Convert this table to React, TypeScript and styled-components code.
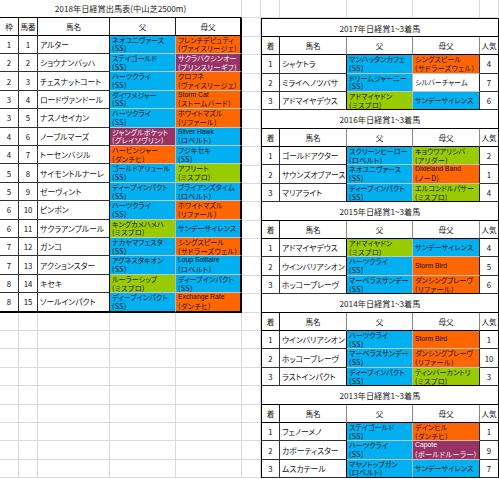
import { Fragment } from "react";
import styled, { createGlobalStyle } from "styled-components";

type Tone = "cyan" | "orange" | "purple" | "lime" | "none";
type Edge = "thick" | "dark" | "soft";

interface Blood {
  name: string;
  note?: string;
  tone: Tone;
  latin?: boolean;
}

interface Entry {
  waku: number;
  num: number;
  name: string;
  sire: Blood;
  dam: Blood;
}

interface Placed {
  place: number;
  name: string;
  sire: Blood;
  dam: Blood;
  pop: number;
}

interface Year {
  year: number;
  rows: Placed[];
}

const toneBg: Record<Tone, string> = {
  cyan: "#00b0f0",
  orange: "#ff6600",
  purple: "#993366",
  lime: "#99cc00",
  none: "#ffffff",
};

const c = (name: string, note?: string): Blood => ({ name, note, tone: "cyan" });
const o = (name: string, note?: string): Blood => ({ name, note, tone: "orange" });
const p = (name: string, note?: string): Blood => ({ name, note, tone: "purple" });
const l = (name: string, note?: string): Blood => ({ name, note, tone: "lime" });

const entries: Entry[] = [
  { waku: 1, num: 1, name: "アルター", sire: c("ネオユニヴァース", "(SS)"), dam: o("フレンチデピュティ", "(ヴァイスリージェ)") },
  { waku: 2, num: 2, name: "ショウナンバッハ", sire: c("ステイゴールド", "(SS)"), dam: p("サクラバクシンオー", "(プリンスリーギフ)") },
  { waku: 2, num: 3, name: "チェスナットコート", sire: c("ハーツクライ", "(SS)"), dam: o("クロフネ", "(ヴァイスリージェ)") },
  { waku: 3, num: 4, name: "ロードヴァンドール", sire: c("ダイワメジャー", "(SS)"), dam: { ...o("Storm Cat", "(ストームバード)"), latin: true } },
  { waku: 3, num: 5, name: "ナスノセイカン", sire: c("ハーツクライ", "(SS)"), dam: o("ホワイトマズル", "(リファール)") },
  { waku: 4, num: 6, name: "ノーブルマーズ", sire: p("ジャングルポケット", "(グレイソヴリン)"), dam: { ...c("Silver Hawk", "(ロベルト)"), latin: true } },
  { waku: 4, num: 7, name: "トーセンバジル", sire: o("ハービンジャー", "(ダンチヒ)"), dam: c("フジキセキ", "(SS)") },
  { waku: 5, num: 8, name: "サイモントルナーレ", sire: c("ゴールドアリュール", "(SS)"), dam: l("アフリート", "(ミスプロ)") },
  { waku: 5, num: 9, name: "ゼーヴィント", sire: c("ディープインパクト", "(SS)"), dam: c("ブライアンズタイム", "(ロベルト)") },
  { waku: 6, num: 10, name: "ピンポン", sire: c("ハーツクライ", "(SS)"), dam: o("ホワイトマズル", "(リファール)") },
  { waku: 6, num: 11, name: "サクラアンプルール", sire: l("キングカメハメハ", "(ミスプロ)"), dam: c("サンデーサイレンス") },
  { waku: 7, num: 12, name: "ガンコ", sire: c("ナカヤマフェスタ", "(SS)"), dam: o("シングスピール", "(サドラーズウェル)") },
  { waku: 7, num: 13, name: "アクションスター", sire: c("アグネスタキオン", "(SS)"), dam: { ...c("Loup Solitaire", "(ロベルト)"), latin: true } },
  { waku: 8, num: 14, name: "キセキ", sire: l("ルーラーシップ", "(ミスプロ)"), dam: c("ディープインパクト", "(SS)") },
  { waku: 8, num: 15, name: "ソールインパクト", sire: c("ディープインパクト", "(SS)"), dam: { ...o("Exchange Rate", "(ダンチヒ)"), latin: true } },
];

const years: Year[] = [
  {
    year: 2017,
    rows: [
      { place: 1, name: "シャケトラ", sire: c("マンハッタンカフェ", "(SS)"), dam: o("シングスピール", "(サドラーズウェル)"), pop: 4 },
      { place: 2, name: "ミライヘノツバサ", sire: c("ドリームジャーニー", "(SS)"), dam: { name: "シルバーチャーム", tone: "none" }, pop: 7 },
      { place: 3, name: "アドマイヤデウス", sire: l("アドマイヤドン", "(ミスプロ)"), dam: c("サンデーサイレンス"), pop: 6 },
    ],
  },
  {
    year: 2016,
    rows: [
      { place: 1, name: "ゴールドアクター", sire: c("スクリーンヒーロー", "(ロベルト)"), dam: l("キョウワアリシバ", "(アリダー)"), pop: 2 },
      { place: 2, name: "サウンズオブアース", sire: c("ネオユニヴァース", "(SS)"), dam: { ...o("Dixieland Band", "(ノーD)"), latin: true }, pop: 1 },
      { place: 3, name: "マリアライト", sire: c("ディープインパクト", "(SS)"), dam: l("エルコンドルパサー", "(ミスプロ)"), pop: 4 },
    ],
  },
  {
    year: 2015,
    rows: [
      { place: 1, name: "アドマイヤデウス", sire: l("アドマイヤドン", "(ミスプロ)"), dam: c("サンデーサイレンス"), pop: 4 },
      { place: 2, name: "ウインバリアシオン", sire: c("ハーツクライ", "(SS)"), dam: { ...o("Storm Bird"), latin: true }, pop: 5 },
      { place: 3, name: "ホッコーブレーヴ", sire: c("マーベラスサンデー", "(SS)"), dam: o("ダンシングブレーヴ", "(リファール)"), pop: 6 },
    ],
  },
  {
    year: 2014,
    rows: [
      { place: 1, name: "ウインバリアシオン", sire: c("ハーツクライ", "(SS)"), dam: { ...o("Storm Bird"), latin: true }, pop: 1 },
      { place: 2, name: "ホッコーブレーヴ", sire: c("マーベラスサンデー", "(SS)"), dam: o("ダンシングブレーヴ", "(リファール)"), pop: 10 },
      { place: 3, name: "ラストインパクト", sire: c("ディープインパクト", "(SS)"), dam: l("ティンバーカントリ", "(ミスプロ)"), pop: 3 },
    ],
  },
  {
    year: 2013,
    rows: [
      { place: 1, name: "フェノーメノ", sire: c("ステイゴールド", "(SS)"), dam: o("デインヒル", "(ダンチヒ)"), pop: 1 },
      { place: 2, name: "カポーティスター", sire: c("ハーツクライ", "(SS)"), dam: { ...p("Capote", "(ボールドルーラー)"), latin: true }, pop: 9 },
      { place: 3, name: "ムスカテール", sire: c("マヤノトップガン", "(ロベルト)"), dam: c("サンデーサイレンス"), pop: 7 },
    ],
  },
];

const GlobalStyle = createGlobalStyle`
  html, body {
    margin: 0;
    padding: 0;
    background: #ffffff;
  }
  body {
    font-family: "Noto Sans CJK JP", "Noto Sans", sans-serif;
    font-feature-settings: "palt";
    color: #111;
  }
`;

const Sheet = styled.div`
  display: grid;
  grid-template-columns: 19px 19px 72px 66px 66px 19px 19px 67px 66px 67px 19px;
  grid-template-rows: repeat(26, 18.4px);
  width: 499px;
  height: 479px;
  overflow: hidden;
`;

const Blank = styled.div`
  box-sizing: border-box;
  border-right: 1px solid #dadada;
  border-bottom: 1px solid #dadada;
`;

const LeftTable = styled.div`
  grid-column: 1 / 6;
  grid-row: 1 / 18;
  display: grid;
  grid-template-columns: 19px 19px 72px 66px 66px;
  grid-template-rows: repeat(17, 1fr);
`;

const RightTable = styled.div<{ $row: number; $first: boolean }>`
  grid-column: 7 / 12;
  grid-row: ${(p) => p.$row} / span 5;
  display: grid;
  grid-template-columns: 18px 67px 66px 67px 19px;
  grid-template-rows: repeat(5, 1fr);
  border-left: 1px solid #000;
  border-top: ${(p) => (p.$first ? "1px solid #000" : "none")};
  box-sizing: border-box;
`;

const Title = styled.div<{ $span: number; $edge: string }>`
  grid-column: span ${(p) => p.$span};
  box-sizing: border-box;
  display: flex;
  align-items: center;
  justify-content: center;
  font-size: 8.2px;
  white-space: nowrap;
  color: #222;
  border-right: 1px solid ${(p) => p.$edge};
  border-bottom: 1px solid #000;
`;

const Head = styled.div<{ $edge?: Edge }>`
  box-sizing: border-box;
  display: flex;
  align-items: center;
  justify-content: center;
  font-size: 7.6px;
  white-space: nowrap;
  overflow-x: clip;
  border-bottom: 1px solid #000;
  border-right: ${(p) =>
    p.$edge === "thick" ? "2px solid #000" : p.$edge === "soft" ? "1px solid #8a8a8a" : "1px solid #222"};
`;

const Plain = styled.div<{ $center?: boolean; $last?: boolean; $edge?: boolean }>`
  box-sizing: border-box;
  display: flex;
  align-items: center;
  justify-content: ${(p) => (p.$center ? "center" : "flex-start")};
  padding-left: ${(p) => (p.$center ? "0" : "2px")};
  font-size: 7.8px;
  white-space: nowrap;
  overflow-x: clip;
  border-right: 1px solid ${(p) => (p.$edge ? "#000" : "#333")};
  border-bottom: ${(p) => (p.$last ? "2px solid #000" : "1px solid #333")};
`;

const BloodCell = styled.div<{ $tone: Tone; $edge: Edge; $last: Edge }>`
  box-sizing: border-box;
  display: flex;
  flex-direction: column;
  justify-content: center;
  padding-left: 2px;
  background: ${(p) => toneBg[p.$tone]};
  color: ${(p) => (p.$tone === "purple" ? "#ffffff" : "#111")};
  font-size: 7.1px;
  line-height: 8.7px;
  white-space: nowrap;
  overflow-x: clip;
  border-right: ${(p) =>
    p.$edge === "thick" ? "2px solid #000" : p.$edge === "dark" ? "1px solid #222" : "1px solid #b8b8b8"};
  border-bottom: ${(p) =>
    p.$last === "thick" ? "2px solid #000" : p.$last === "dark" ? "1px solid #000" : "1px solid #c4c4c4"};
`;

const Latin = styled.span`
  font-family: "Liberation Sans", Arial, sans-serif;
  font-size: 6.8px;
`;

const Note = styled.span`
  letter-spacing: 0.4px;
`;

const Pedigree = ({ blood, edge, last }: { blood: Blood; edge: Edge; last: Edge }) => (
  <BloodCell $tone={blood.tone} $edge={edge} $last={last}>
    {blood.latin ? <Latin>{blood.name}</Latin> : <span>{blood.name}</span>}
    {blood.note && <Note>{blood.note}</Note>}
  </BloodCell>
);

export default function App() {
  const blanks = 26 * 11 - 17 * 5 - years.length * 25;

  return (
    <>
      <GlobalStyle />
      <Sheet>
        <LeftTable>
          <Title $span={5} $edge="#dadada">
            2018年日経賞出馬表(中山芝2500m)
          </Title>
          <Head>枠</Head>
          <Head>馬番</Head>
          <Head>馬名</Head>
          <Head>父</Head>
          <Head $edge="thick">母父</Head>
          {entries.map((e, i) => {
            const last = i === entries.length - 1;
            return (
              <Fragment key={e.num}>
                <Plain $center $last={last}>{e.waku}</Plain>
                <Plain $center $last={last}>{e.num}</Plain>
                <Plain $last={last} $edge>{e.name}</Plain>
                <Pedigree blood={e.sire} edge="soft" last={last ? "thick" : "soft"} />
                <Pedigree blood={e.dam} edge="thick" last={last ? "thick" : "soft"} />
              </Fragment>
            );
          })}
        </LeftTable>

        {years.map((y, k) => (
          <RightTable key={y.year} $row={2 + k * 5} $first={k === 0}>
            <Title $span={5} $edge="#000">
              {y.year}年日経賞1~3着馬
            </Title>
            <Head>着</Head>
            <Head $edge="soft">馬名</Head>
            <Head $edge="soft">父</Head>
            <Head $edge="soft">母父</Head>
            <Head>人気</Head>
            {y.rows.map((r, i) => {
              const last = i === y.rows.length - 1;
              return (
                <Fragment key={r.place}>
                  <Plain $center>{r.place}</Plain>
                  <Plain $edge>{r.name}</Plain>
                  <Pedigree blood={r.sire} edge="soft" last={last ? "dark" : "soft"} />
                  <Pedigree blood={r.dam} edge="dark" last={last ? "dark" : "soft"} />
                  <Plain $center $edge>{r.pop}</Plain>
                </Fragment>
              );
            })}
          </RightTable>
        ))}

        {Array.from({ length: blanks }).map((_, i) => (
          <Blank key={i} />
        ))}
      </Sheet>
    </>
  );
}
